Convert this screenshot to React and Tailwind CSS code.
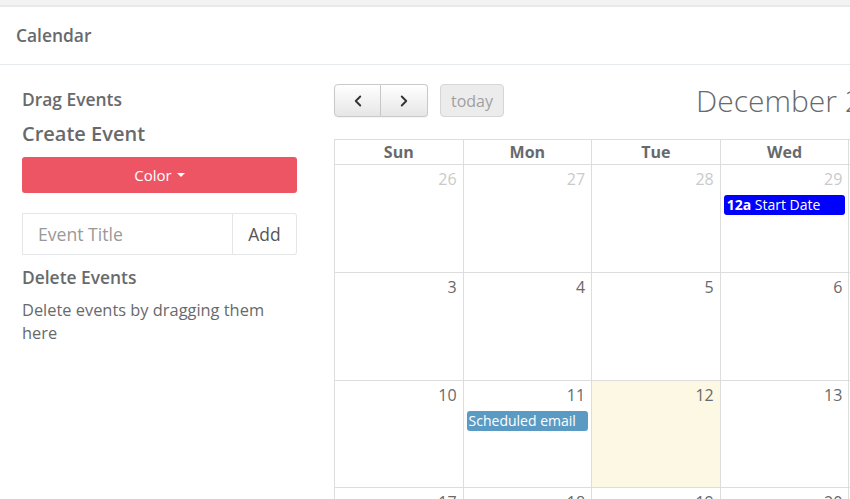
import { ChevronLeft, ChevronRight } from "lucide-react";

const weeks = [
  [
    { d: 26, other: true },
    { d: 27, other: true },
    { d: 28, other: true },
    { d: 29, other: true, ev: "start" },
    { d: 30, other: true },
    { d: 1 },
    { d: 2 },
  ],
  [{ d: 3 }, { d: 4 }, { d: 5 }, { d: 6 }, { d: 7 }, { d: 8 }, { d: 9 }],
  [
    { d: 10 },
    { d: 11, ev: "email" },
    { d: 12, today: true },
    { d: 13 },
    { d: 14 },
    { d: 15 },
    { d: 16 },
  ],
  [{ d: 17 }, { d: 18 }, { d: 19 }, { d: 20 }, { d: 21 }, { d: 22 }, { d: 23 }],
];

const days = ["Sun", "Mon", "Tue", "Wed", "Thu", "Fri", "Sat"];

function DayCell({ cell, short }) {
  return (
    <div
      className={`${short ? "h-[107px]" : "h-[108px]"} border-r border-b border-[#ddd] ${cell.today ? "bg-[#fcf8e3]" : "bg-white"}`}
    >
      <div
        className={`text-right pr-[6px] pt-[4px] text-[16px] leading-[20px] ${cell.other ? "text-[#c9cacb]" : "text-[#676a6c]"}`}
      >
        {cell.d}
      </div>
      {cell.ev === "start" && (
        <div className="mx-[3px] mt-[6px] h-[20px] rounded-[3px] bg-[#0000ff] px-[3px] text-[14px] leading-[20px] text-white">
          <span className="font-bold">12a</span> Start Date
        </div>
      )}
      {cell.ev === "email" && (
        <div className="mx-[3px] mt-[6px] h-[20px] rounded-[3px] bg-[#5b9bc3] px-[2px] text-[14px] leading-[20px] text-white">
          Scheduled email
        </div>
      )}
    </div>
  );
}

export default function App() {
  return (
    <div
      className="w-[850px] h-[499px] overflow-hidden bg-white text-[#676a6c]"
      style={{ fontFamily: '"Open Sans", "Noto Sans", sans-serif' }}
    >
      <div className="h-[5px] bg-[#f3f3f4]" />
      <div className="border-t-2 border-[#e7eaec]" />

      {/* panel title */}
      <div className="h-[58px] flex items-center px-4 border-b border-[#e7eaec]">
        <h5 className="text-[17.4px] font-semibold">Calendar</h5>
      </div>

      <div className="flex pl-[22px]">
        {/* left column */}
        <div className="w-[275px] shrink-0 pt-[23px]">
          <h4 className="text-[17.4px] leading-[22px] font-semibold">Drag Events</h4>
          <h3 className="mt-[11px] text-[20px] leading-[26px] font-semibold">Create Event</h3>
          <button className="mt-[10px] w-full h-[36px] rounded-[3px] bg-[#ed5565] text-white text-[15px] flex items-center justify-center gap-[5px]">
            Color
            <span className="inline-block w-0 h-0 border-l-[4px] border-r-[4px] border-t-[4px] border-l-transparent border-r-transparent border-t-white" />
          </button>
          <div className="mt-[20px] flex h-[42px]">
            <div className="flex-1 border border-[#e5e6e7] flex items-center px-[15px] text-[17.6px] text-[#999]">
              Event Title
            </div>
            <div className="w-[64px] border border-l-0 border-[#e5e6e7] rounded-r-[3px] flex items-center justify-center text-[17.4px] text-[#555]">
              Add
            </div>
          </div>
          <h4 className="mt-[11px] text-[17.4px] leading-[22px] font-semibold">Delete Events</h4>
          <p className="mt-[10px] text-[16.4px] leading-[23px]">
            Delete events by dragging them here
          </p>
        </div>

        {/* calendar */}
        <div className="ml-[37px] w-[901px] shrink-0 pt-[19px]">
          <div className="flex items-center h-[33px]">
            <div className="flex h-[33px]">
              <button className="w-[47px] h-[33px] flex items-center justify-center border border-[#c9c9c9] rounded-l-[4px] bg-gradient-to-b from-white to-[#e6e6e6] shadow-[0_1px_2px_rgba(0,0,0,0.05)] text-[#333]">
                <ChevronLeft size={18} strokeWidth={2.5} />
              </button>
              <button className="w-[47px] h-[33px] flex items-center justify-center border border-l-0 border-[#c9c9c9] rounded-r-[4px] bg-gradient-to-b from-white to-[#e6e6e6] shadow-[0_1px_2px_rgba(0,0,0,0.05)] text-[#333]">
                <ChevronRight size={18} strokeWidth={2.5} />
              </button>
            </div>
            <button className="ml-[12px] w-[64px] h-[33px] rounded-[4px] border border-[#d6d6d6] bg-[#ececec] text-[16px] text-[#a0a0a0]">
              today
            </button>
            <h2 className="ml-[192px] text-[30px] font-light text-[#676a6c] leading-[36px] whitespace-nowrap">
              December 2017
            </h2>
          </div>

          <div className="mt-[22px] border-l border-t border-[#ddd]">
            <div className="grid grid-cols-7">
              {days.map((d) => (
                <div
                  key={d}
                  className="h-[25px] border-r border-b border-[#ddd] text-center text-[16px] leading-[24px] font-bold"
                >
                  {d}
                </div>
              ))}
            </div>
            {weeks.map((w, i) => (
              <div key={i} className="grid grid-cols-7">
                {w.map((c) => (
                  <DayCell key={c.d} cell={c} short={i === 2} />
                ))}
              </div>
            ))}
          </div>
        </div>
      </div>
    </div>
  );
}
